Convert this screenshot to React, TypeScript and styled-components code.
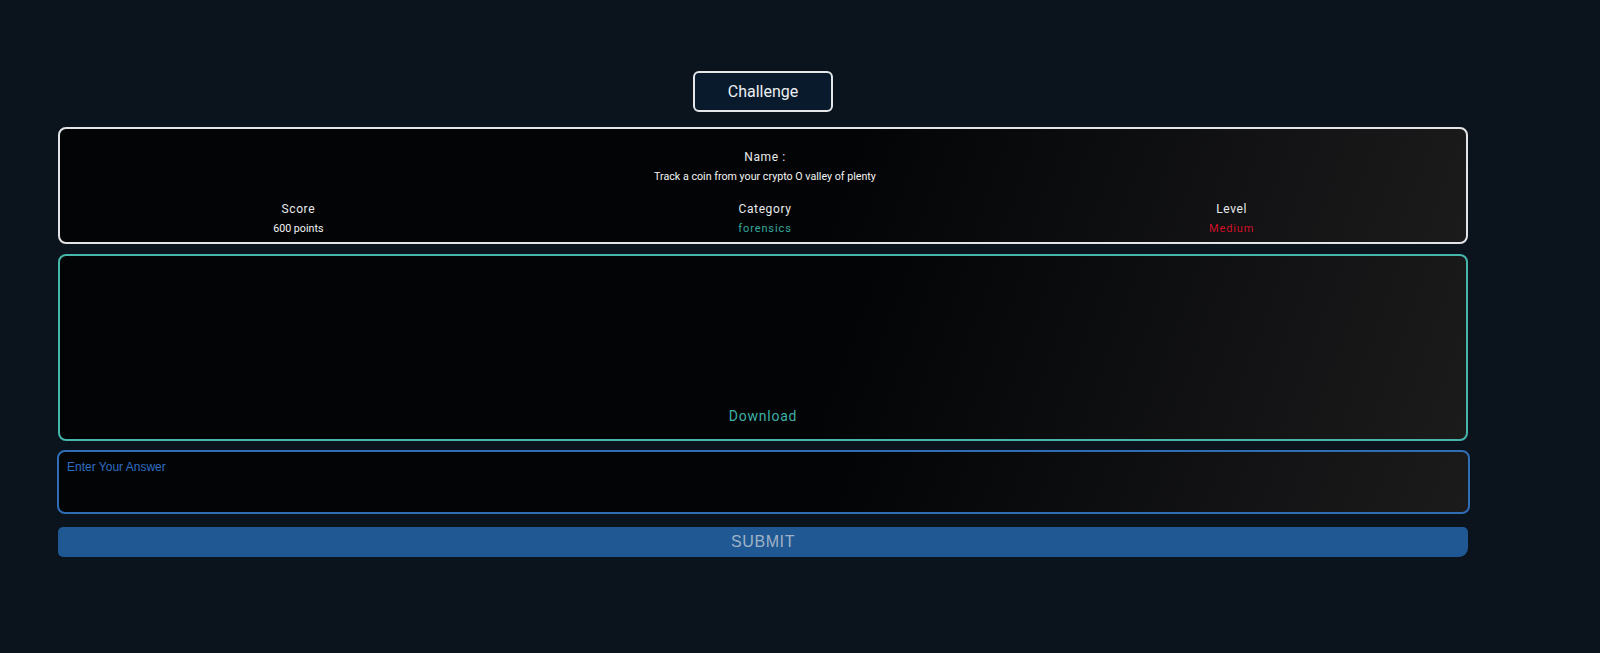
import React from "react";
import styled, { createGlobalStyle } from "styled-components";

const GlobalStyle = createGlobalStyle`
  html, body {
    margin: 0;
    padding: 0;
    background: #0b131c;
    font-family: Roboto, "Liberation Sans", Arial, sans-serif;
  }
  * { box-sizing: border-box; }
`;

const Page = styled.div`
  min-height: 653px;
  padding: 71px 0 0 58px;
`;

const Column = styled.div`
  width: 1410px;
  display: flex;
  flex-direction: column;
  align-items: center;
`;

const TitleButton = styled.button`
  width: 140px;
  height: 41px;
  border: 2px solid #e4e6ea;
  border-radius: 6px;
  background: #0a1a2d;
  color: #eef0f2;
  font-family: Roboto, sans-serif;
  font-size: 16px;
  margin: 0 0 15px;
  padding: 0;
`;

const Card = styled.section<{ $border: string; $height: number }>`
  width: 100%;
  height: ${(p) => p.$height}px;
  border: 2px solid ${(p) => p.$border};
  border-radius: 8px;
  background: linear-gradient(110deg, #030406 55%, #1b1b1c 100%);
`;

const InfoCard = styled(Card)`
  display: flex;
  flex-direction: column;
  align-items: center;
  padding: 19px 1px 0 5px;
`;

const Field = styled.div<{ $flex?: boolean }>`
  display: flex;
  flex-direction: column;
  align-items: center;
  gap: 1px;
  ${(p) => (p.$flex ? "flex: 1;" : "")}
`;

const Label = styled.div`
  font-size: 12px;
  line-height: 18px;
  letter-spacing: 0.6px;
  color: #e8e9eb;
`;

const Value = styled.div<{ $color?: string; $spaced?: boolean }>`
  font-size: ${(p) => (p.$spaced ? "11px" : "10.7px")};
  line-height: 19px;
  color: ${(p) => p.$color || "#f4f4f4"};
  letter-spacing: ${(p) => (p.$spaced ? "0.9px" : "0")};
`;

const StatRow = styled.div`
  display: flex;
  width: 100%;
  margin-top: 14px;
`;

const DownloadCard = styled(Card)`
  margin-top: 10px;
  display: flex;
  flex-direction: column;
  justify-content: flex-end;
  align-items: center;
  padding-bottom: 13px;
`;

const DownloadLink = styled.a`
  font-size: 14px;
  line-height: 20px;
  letter-spacing: 0.75px;
  color: #3fb0a6;
  text-decoration: none;
`;

const AnswerBox = styled.textarea`
  width: calc(100% + 3px);
  margin: 9px -2px 0 -1px;
  height: 64px;
  border: 2px solid #2f6db5;
  border-radius: 8px;
  background: linear-gradient(110deg, #030406 55%, #1b1b1c 100%);
  color: #d0d8e4;
  font-family: "Liberation Sans", Arial, sans-serif;
  font-size: 12px;
  line-height: 14px;
  padding: 8px 8px;
  resize: none;
  outline: none;
  &::placeholder {
    color: #2f6ec2;
  }
`;

const SubmitButton = styled.button`
  width: 100%;
  height: 30px;
  margin-top: 13px;
  border: none;
  border-radius: 5px 5px 9px 5px;
  background: #1f5893;
  color: #9fb2c6;
  font-family: "Liberation Sans", Arial, sans-serif;
  font-size: 16px;
  letter-spacing: 0.6px;
  padding: 0;
`;

export default function App() {
  return (
    <>
      <GlobalStyle />
      <Page>
        <Column>
          <TitleButton>Challenge</TitleButton>
          <InfoCard $border="#e2e4e7" $height={117}>
            <Field>
              <Label>Name :</Label>
              <Value>Track a coin from your crypto O valley of plenty</Value>
            </Field>
            <StatRow>
              <Field $flex>
                <Label>Score</Label>
                <Value>600 points</Value>
              </Field>
              <Field $flex>
                <Label>Category</Label>
                <Value $color="#36a99c" $spaced>forensics</Value>
              </Field>
              <Field $flex>
                <Label>Level</Label>
                <Value $color="#cf1028" $spaced>Medium</Value>
              </Field>
            </StatRow>
          </InfoCard>
          <DownloadCard $border="#47b6aa" $height={187}>
            <DownloadLink href="#">Download</DownloadLink>
          </DownloadCard>
          <AnswerBox placeholder="Enter Your Answer" />
          <SubmitButton>SUBMIT</SubmitButton>
        </Column>
      </Page>
    </>
  );
}
